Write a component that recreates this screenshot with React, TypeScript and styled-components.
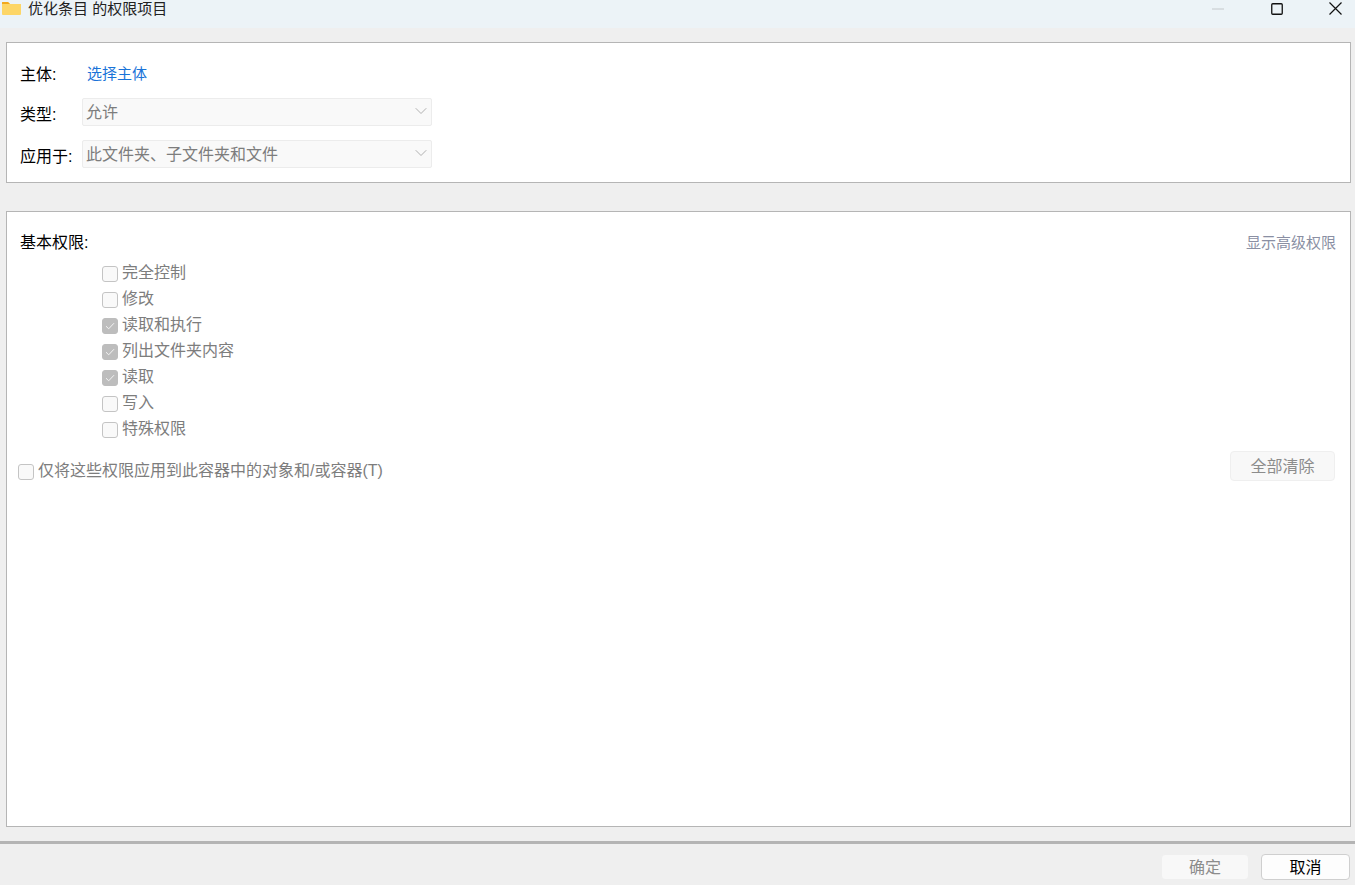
import React from 'react';
import styled, { createGlobalStyle } from 'styled-components';
import { ChevronDown } from 'lucide-react';

const GlobalStyle = createGlobalStyle`
  html, body {
    margin: 0;
    padding: 0;
    overflow: hidden;
  }
  * {
    box-sizing: border-box;
  }
`;

const Window = styled.div`
  width: 1355px;
  height: 885px;
  display: flex;
  flex-direction: column;
  background: #efefef;
  font-family: "Liberation Sans", "Noto Sans CJK SC", sans-serif;
  font-size: 16px;
  color: #000;
`;

const TitleBar = styled.div`
  height: 28px;
  flex: none;
  display: flex;
  align-items: flex-start;
  justify-content: space-between;
  background: #ecf3f7;
`;

const TitleLeft = styled.div`
  display: flex;
  align-items: center;
  height: 17px;
  padding-left: 2px;
  gap: 7px;
`;

const TitleText = styled.span`
  font-size: 15px;
  line-height: 17px;
  color: #222;
`;

const WindowButtons = styled.div`
  display: flex;
  align-items: center;
  height: 17px;
  gap: 46px;
  padding-right: 13px;
`;

const WindowButton = styled.div`
  width: 13px;
  height: 17px;
  display: flex;
  align-items: center;
  justify-content: center;
`;

const Panel = styled.section<{ $height: number }>`
  height: ${p => p.$height}px;
  flex: none;
  margin: 0 4px 0 6px;
  background: #fff;
  border: 1px solid #b5b5b5;
`;

const SubjectPanel = styled(Panel)`
  margin-top: 14px;
  padding: 10px 0 0 13px;
`;

const PermissionPanel = styled(Panel)`
  margin-top: 28px;
  padding: 19px 14px 0 13px;
`;

const FormRow = styled.div<{ $height: number }>`
  height: ${p => p.$height}px;
  display: flex;
  align-items: center;
`;

const FormLabel = styled.span`
  width: 62px;
  flex: none;
  font-size: 16px;
  line-height: 20px;
  padding-top: 5px;
  white-space: nowrap;
`;

const LinkText = styled.a`
  margin-left: 5px;
  padding-top: 4px;
  font-size: 15px;
  line-height: 20px;
  color: #1a73d8;
`;

const SelectBox = styled.div`
  width: 350px;
  height: 28px;
  display: flex;
  align-items: center;
  justify-content: space-between;
  padding: 0 0 2px 3px;
  background: #f9f9f9;
  border: 1px solid #ececec;
  border-radius: 2px;
  font-size: 16px;
  color: #7d7d7d;
`;

const HeaderRow = styled.div`
  display: flex;
  justify-content: space-between;
  align-items: center;
  height: 20px;
`;

const SectionLabel = styled.span`
  font-size: 16px;
  line-height: 20px;
  padding-top: 4px;
`;

const AdvancedLink = styled.span`
  font-size: 15px;
  line-height: 20px;
  padding-top: 4px;
  color: #8a8fa3;
`;

const CheckList = styled.div`
  display: flex;
  flex-direction: column;
  padding: 8px 0 0 82px;
`;

const CheckRow = styled.div`
  height: 26px;
  display: flex;
  align-items: center;
  gap: 4px;
`;

const Box = styled.span<{ $checked?: boolean }>`
  width: 16px;
  height: 16px;
  flex: none;
  display: flex;
  align-items: center;
  justify-content: center;
  margin-top: 4px;
  border-radius: 3px;
  background: ${p => (p.$checked ? '#bdbdbd' : '#f9f9f9')};
  border: 1px solid ${p => (p.$checked ? '#bdbdbd' : '#c4c4c4')};
`;

const CheckText = styled.span`
  font-size: 16px;
  line-height: 20px;
  padding-top: 2px;
  color: #7d7d7d;
`;

const ClearRow = styled.div`
  display: flex;
  justify-content: space-between;
  align-items: flex-start;
  margin-top: 10px;
  padding-right: 1px;
`;

const ScopeOption = styled.div`
  display: flex;
  align-items: center;
  gap: 4px;
  margin: 8px 0 0 -2px;
`;

const FlatButton = styled.button<{ $active?: boolean }>`
  width: ${p => (p.$active ? '89px' : '88px')};
  height: 26px;
  padding: 2px 0 0;
  font-family: inherit;
  font-size: 16px;
  line-height: 20px;
  border-radius: 4px;
  background: ${p => (p.$active ? '#fdfdfd' : '#f8f8f8')};
  border: 1px solid ${p => (p.$active ? '#cfcfcf' : '#efefef')};
  color: ${p => (p.$active ? '#000' : '#8c8c8c')};
`;

const ClearButton = styled(FlatButton)`
  width: 105px;
  height: 30px;
`;

const Footer = styled.footer`
  margin-top: 14px;
  flex: 1;
  display: flex;
  justify-content: flex-end;
  gap: 12px;
  padding: 10px 5px 0 0;
  border-top: 3px solid #b4b4b4;
`;

const FolderIcon = () => (
  <svg width="19" height="13" viewBox="0 0 19 13">
    <path d="M0 0.5 Q0 0 0.5 0 H6 L8 2 H19 V12 Q19 13 18 13 H1 Q0 13 0 12 Z" fill="#fdd667" />
    <path d="M0 0.5 Q0 0 0.5 0 H6 L8 2 H0 Z" fill="#f2a91e" />
  </svg>
);

const CheckMark = () => (
  <svg width="10" height="8" viewBox="0 0 10 8" fill="none">
    <path d="M1 4.2 L3.7 6.8 L9 1.2" stroke="#f4f4f4" strokeWidth="1" />
  </svg>
);

const permissions = [
  { label: '完全控制', checked: false },
  { label: '修改', checked: false },
  { label: '读取和执行', checked: true },
  { label: '列出文件夹内容', checked: true },
  { label: '读取', checked: true },
  { label: '写入', checked: false },
  { label: '特殊权限', checked: false },
];

const App: React.FC = () => {
  return (
    <Window>
      <GlobalStyle />
      <TitleBar>
        <TitleLeft>
          <FolderIcon />
          <TitleText>优化条目 的权限项目</TitleText>
        </TitleLeft>
        <WindowButtons>
          <WindowButton>
            <svg width="12" height="2" viewBox="0 0 12 2">
              <path d="M0 1 H12" stroke="#c4c8cb" strokeWidth="1" />
            </svg>
          </WindowButton>
          <WindowButton>
            <svg width="12" height="12" viewBox="0 0 12 12" fill="none">
              <rect x="0.75" y="0.75" width="10.5" height="10.5" rx="1" stroke="#111" strokeWidth="1.3" />
            </svg>
          </WindowButton>
          <WindowButton>
            <svg width="13" height="13" viewBox="0 0 13 13" fill="none">
              <path d="M0.5 0.5 L12.5 12.5 M12.5 0.5 L0.5 12.5" stroke="#111" strokeWidth="1.2" />
            </svg>
          </WindowButton>
        </WindowButtons>
      </TitleBar>

      <SubjectPanel $height={141}>
        <FormRow $height={38}>
          <FormLabel>主体:</FormLabel>
          <LinkText>选择主体</LinkText>
        </FormRow>
        <FormRow $height={42}>
          <FormLabel>类型:</FormLabel>
          <SelectBox>
            允许
            <ChevronDown size={20} strokeWidth={1.1} color="#a8a8a8" />
          </SelectBox>
        </FormRow>
        <FormRow $height={42}>
          <FormLabel>应用于:</FormLabel>
          <SelectBox>
            此文件夹、子文件夹和文件
            <ChevronDown size={20} strokeWidth={1.1} color="#a8a8a8" />
          </SelectBox>
        </FormRow>
      </SubjectPanel>

      <PermissionPanel $height={616}>
        <HeaderRow>
          <SectionLabel>基本权限:</SectionLabel>
          <AdvancedLink>显示高级权限</AdvancedLink>
        </HeaderRow>
        <CheckList>
          {permissions.map(item => (
            <CheckRow key={item.label}>
              <Box $checked={item.checked}>{item.checked && <CheckMark />}</Box>
              <CheckText>{item.label}</CheckText>
            </CheckRow>
          ))}
        </CheckList>
        <ClearRow>
          <ScopeOption>
            <Box />
            <CheckText>仅将这些权限应用到此容器中的对象和/或容器(T)</CheckText>
          </ScopeOption>
          <ClearButton>全部清除</ClearButton>
        </ClearRow>
      </PermissionPanel>

      <Footer>
        <FlatButton>确定</FlatButton>
        <FlatButton $active>取消</FlatButton>
      </Footer>
    </Window>
  );
};

export default App;
